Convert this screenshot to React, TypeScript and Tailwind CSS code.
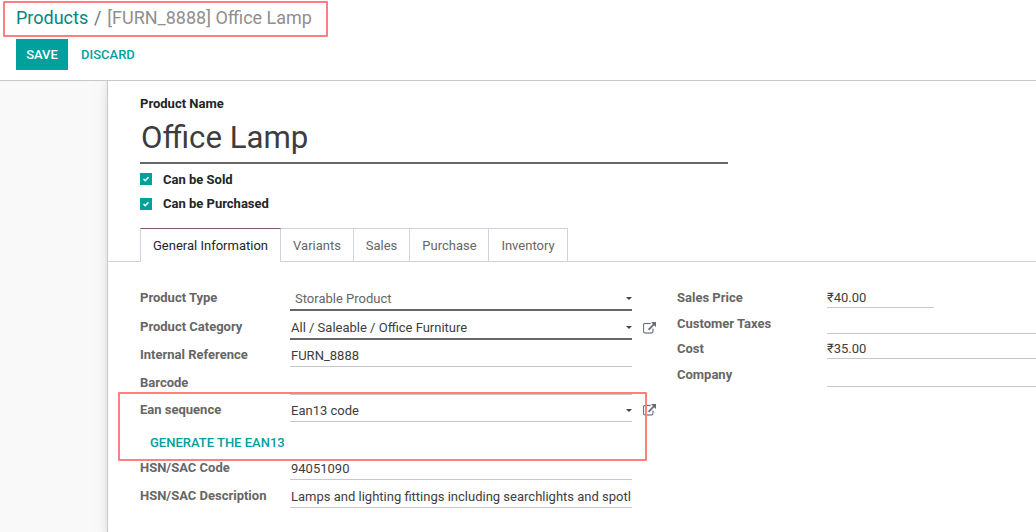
import type { ReactNode } from "react";

const Caret = () => (
  <svg className="mb-[9px] h-[3px] w-[6px] shrink-0" viewBox="0 0 6 3" fill="#444">
    <path d="M0 0h6L3 3z" />
  </svg>
);

const ExternalLink = () => (
  <svg className="mb-[5px] ml-[11px] h-[13.300px] w-[13.300px] shrink-0 self-end" viewBox="0 0 1792 1792" fill="#666f78" stroke="#666f78" strokeWidth="24">
    <path d="M1408 928v320q0 119-84.500 203.500t-203.500 84.500h-832q-119 0-203.500-84.500t-84.500-203.500v-832q0-119 84.500-203.500t203.500-84.500h704q14 0 23 9t9 23v64q0 14-9 23t-23 9h-704q-66 0-113 47t-47 113v832q0 66 47 113t113 47h832q66 0 113-47t47-113v-320q0-14 9-23t23-9h64q14 0 23 9t9 23zm384-864v512q0 26-19 45t-45 19-45-19l-176-176-652 652q-10 10-23 10t-23-10l-114-114q-10-10-10-23t10-23l652-652-176-176q-19-19-19-45t19-45 45-19h512q26 0 45 19t19 45z" />
  </svg>
);

type RowProps = {
  label: string;
  row: string;
  pad?: string;
  field: string;
  children?: ReactNode;
  link?: boolean;
};

const Row = ({ label, row, pad = "pt-1.5", field, children, link }: RowProps) => (
  <div className={`flex ${row}`}>
    <div className={`w-[150px] shrink-0 font-bold text-[#666] ${pad}`}>{label}</div>
    <div className={`flex h-full shrink-0 items-end text-[#3d3d3d] ${field}`}>{children}</div>
    {link && <ExternalLink />}
  </div>
);

const Check = ({ label, box = "" }: { label: string; box?: string }) => (
  <label className="flex h-6 items-center font-bold text-[#212529]">
    <span className={`mr-[11px] flex h-3 w-3 items-center justify-center bg-[#00a09d] ${box}`}>
      <svg className="h-[6px] w-[6px]" viewBox="0 0 6 6" fill="none" stroke="white" strokeWidth="1.5">
        <path d="M.5 3l1.700 1.700L5.500 1.300" />
      </svg>
    </span>
    {label}
  </label>
);

const thin = "w-[342px] border-b border-[#c8c8c8]";
const thick = "w-[342px] border-b-2 border-[#666]";

export default function App() {
  return (
    <div className="relative flex h-[532px] w-[1036px] flex-col overflow-hidden bg-white font-['Roboto',sans-serif] text-[13px] leading-5">
      <header className="h-[81px] shrink-0 border-b border-[#c8c8c8] pl-4">
        <nav className="flex h-[39px] items-start pt-[5px] text-[18px] leading-[26px]">
          <a className="text-[#008784]">Products</a>
          <span className="w-[19px] text-center text-[#6c757d]">/</span>
          <span className="text-[#8f8f8f]">[FURN_8888] Office Lamp</span>
        </nav>
        <div className="flex h-[31px] font-medium">
          <button className="w-[52px] bg-[#00a09d] text-white">SAVE</button>
          <button className="ml-[13px] text-[#00a09d]">DISCARD</button>
        </div>
      </header>

      <div className="flex min-h-0 flex-1 overflow-hidden bg-[#f9f9f9]">
        <div className="w-[107px] shrink-0" />
        <main className="-mb-5 -mt-5 flex-1 border-l border-[#c8c8d3] bg-white pt-5 shadow-[0_5px_20px_-15px_black]">
          <section className="pl-8 pt-[13px]">
            <div className="font-bold text-[#212529]">Product Name</div>
            <div className="mb-1 h-[50px] w-[588px] border-b-2 border-[#666] pl-px pt-1 text-[31.2px] leading-10 text-[#3d3d3d]">
              Office Lamp
            </div>
            <Check label="Can be Sold" box="mb-0.5" />
            <Check label="Can be Purchased" />
          </section>

          <div className="mt-3 flex h-[34px] text-[#666]">
            <div className="w-8 border-b border-[#ced4da]" />
            <div className="w-[141px] border-x border-t border-x-[#ced4da] border-t-[#7c5576] pt-[7px] text-center text-[#212529]">
              General Information
            </div>
            <div className="w-[73px] border-y border-r border-[#ced4da] pt-[7px] text-center">Variants</div>
            <div className="w-[56px] border-y border-r border-[#ced4da] pt-[7px] text-center">Sales</div>
            <div className="w-[79px] border-y border-r border-[#ced4da] pl-px pt-[7px] text-center">Purchase</div>
            <div className="w-[79px] border-y border-r border-[#ced4da] pt-[7px] text-center">Inventory</div>
            <div className="flex-1 border-b border-[#ced4da]" />
          </div>

          <section className="flex pl-8 pt-5">
            <div className="w-[537px] shrink-0">
              <Row label="Product Type" row="h-[29px]" field={thick}>
                <span className="flex-1 pl-[5px] text-[#666]">Storable Product</span>
                <Caret />
              </Row>
              <Row label="Product Category" row="h-[29px]" field={thick} link>
                <span className="flex-1 pl-px">All / Saleable / Office Furniture</span>
                <Caret />
              </Row>
              <Row label="Internal Reference" row="h-[27px]" pad="pt-[5px]" field={thin}>
                <span className="pl-px">FURN_8888</span>
              </Row>
              <Row label="Barcode" row="h-7" field={thin} />
              <Row label="Ean sequence" row="h-[27px]" pad="pt-[5px]" field={thin} link>
                <span className="flex-1 pl-px">Ean13 code</span>
                <Caret />
              </Row>
              <div className="flex h-[31px] items-start pl-[10px] pt-[11px]">
                <button className="font-medium text-[#00a09d]">GENERATE THE EAN13</button>
              </div>
              <Row label="HSN/SAC Code" row="h-[27px]" pad="pt-[5px]" field={thin}>
                <span className="pl-px">94051090</span>
              </Row>
              <Row label="HSN/SAC Description" row="h-7" field={thin}>
                <span className="whitespace-nowrap pl-px">
                  Lamps and lighting fittings including searchlights and spotl
                </span>
              </Row>
            </div>
            <div className="flex-1">
              <Row label="Sales Price" row="h-[26px]" field="w-[107px] border-b border-[#c8c8c8]">
                <span className="-mb-px">₹40.00</span>
              </Row>
              <Row label="Customer Taxes" row="h-[26px]" field="w-[220px] border-b border-[#c8c8c8]" />
              <Row label="Cost" row="h-[25px]" pad="pt-[5px]" field="w-[220px] border-b border-[#c8c8c8]">
                <span className="-mb-px">₹35.00</span>
              </Row>
              <Row label="Company" row="h-7" field="w-[220px] border-b border-[#c8c8c8]" />
            </div>
          </section>
        </main>
      </div>

      <div className="pointer-events-none absolute left-[3px] top-px h-9 w-[325px] rounded-[1px] border-2 border-[#ff7f7f]" />
      <div className="pointer-events-none absolute left-[118px] top-[392px] h-[69px] w-[529px] rounded-[1px] border-2 border-[#ff7f7f]" />
    </div>
  );
}
